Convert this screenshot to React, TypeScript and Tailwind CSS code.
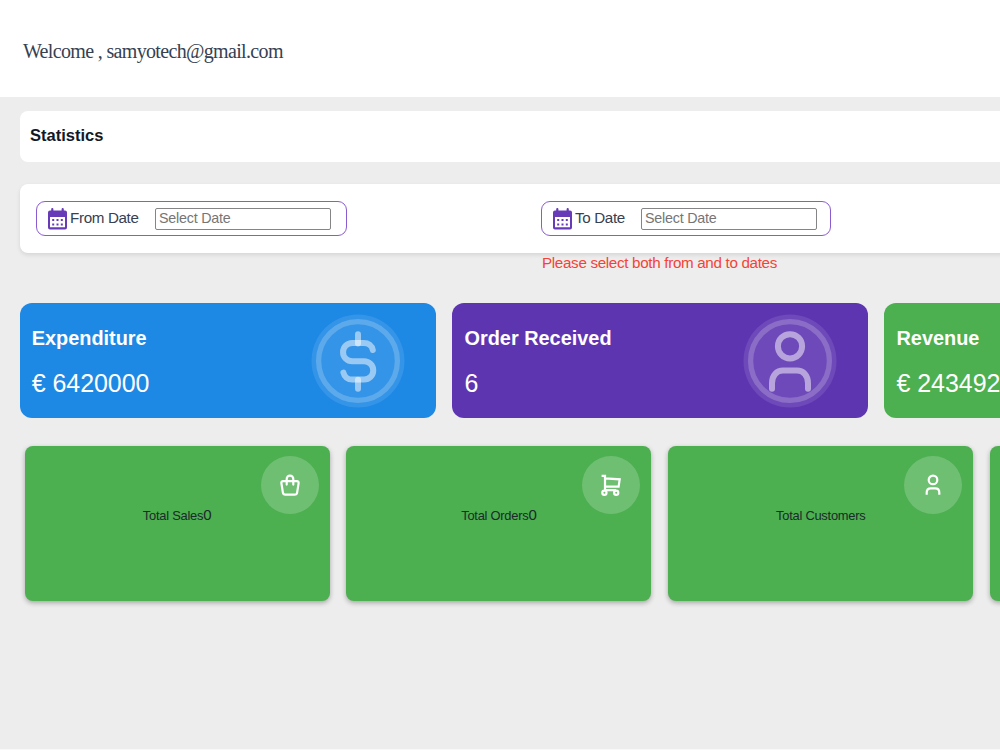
import type { ReactNode } from "react";

function CalendarIcon() {
  return (
    <svg className="ml-[11px] h-[22px] w-[19px] shrink-0" viewBox="0 0 19 22" fill="none">
      <path d="M4.3 1.2V4M14.7 1.2V4" stroke="#673ab7" strokeWidth="2.2" strokeLinecap="round" />
      <path
        fillRule="evenodd"
        fill="#673ab7"
        d="M2 2.4H17a2 2 0 0 1 2 2V19.5a2 2 0 0 1-2 2H2a2 2 0 0 1-2-2V4.4a2 2 0 0 1 2-2ZM2 8.9V19.3H17V8.9Z"
      />
      <path
        d="M4.2 11.1h2v2h-2zM8.5 11.1h2v2h-2zM12.8 11.1h2v2h-2zM4.2 15.4h2v2h-2zM8.5 15.4h2v2h-2zM12.8 15.4h2v2h-2z"
        fill="#673ab7"
      />
    </svg>
  );
}

function DateField({ label, className }: { label: string; className: string }) {
  return (
    <div className={`flex h-[35px] shrink-0 items-center rounded-[9px] border border-[#8a5cd0] ${className}`}>
      <CalendarIcon />
      <span className="-mt-0.5 ml-[3px] grow text-[15.2px] leading-5 tracking-[-0.35px] whitespace-nowrap text-[#364152]">{label}</span>
      <input
        className="h-[22px] w-[176px] rounded-[2px] border border-[#858585] bg-white px-[3px] pb-0.5 text-[14.3px] tracking-[-0.22px] placeholder:text-[#757575]"
        placeholder="Select Date"
      />
    </div>
  );
}

function Medallion({ children }: { children: ReactNode }) {
  return (
    <svg className="mt-[10.7px] size-[94px] shrink-0" viewBox="0 0 94 94" fill="none">
      <circle cx="47" cy="47" r="46.5" fill="#fff" fillOpacity="0.1" />
      <circle cx="47" cy="47" r="39.4" stroke="#fff" strokeOpacity="0.2" strokeWidth="5.3" />
      {children}
    </svg>
  );
}

const stroke = {
  stroke: "#fff",
  strokeOpacity: 0.5,
  strokeWidth: 6,
  strokeLinecap: "round" as const,
};

function SummaryCard({ title, value, className, children }: { title: string; value: string; className: string; children?: ReactNode }) {
  return (
    <div className={`flex h-[115px] w-[415.5px] shrink-0 justify-between rounded-xl pr-[31px] text-white ${className}`}>
      <div className="pt-[23px] whitespace-nowrap">
        <h3 className="text-[19.9px] leading-6 font-bold">{title}</h3>
        <p className="mt-[18px] text-[25px] leading-[30px] tracking-[-0.05px]">{value}</p>
      </div>
      {children && <Medallion>{children}</Medallion>}
    </div>
  );
}

function TotalCard({ label, value, children }: { label?: string; value?: string; children?: ReactNode }) {
  return (
    <div className="relative flex h-[155px] w-[305px] shrink-0 justify-center rounded-lg bg-[#4caf50] pt-[59px] text-[#1b2a2a] shadow-[0_2px_5px_rgba(0,0,0,0.3)]">
      {label && (
        <p className="text-[15px] leading-5 whitespace-nowrap">
          <span className="text-[12.9px] tracking-[-0.25px]">{label}</span>
          {value}
        </p>
      )}
      <div className="absolute top-[10.4px] right-[11px] flex size-[58px] items-center justify-center rounded-full bg-white/20">
        <svg className="-mt-px size-6" viewBox="0 0 24 24" fill="none" stroke="#fff" strokeWidth="2.2" strokeLinecap="round" strokeLinejoin="round">
          {children}
        </svg>
      </div>
    </div>
  );
}

export default function App() {
  return (
    <div className="h-[750px] w-[1000px] overflow-hidden border-b border-[#f8f8f8] bg-[#ededed] font-['Liberation_Sans',Arial,sans-serif]">
      <header className="h-[97px] bg-white pt-[39px] pl-[23px] font-['Liberation_Serif',serif] text-[20px] leading-6 tracking-[-0.66px] text-[#364152]">
        Welcome , samyotech@gmail.com
      </header>
      <main className="w-[1400px] pl-5">
        <section className="mt-3.5 h-[50.5px] rounded-lg bg-white pt-[12px] pl-[10px]">
          <h2 className="text-[16.5px] leading-6 font-bold text-[#121926]">Statistics</h2>
        </section>
        <section className="mt-[22.5px] flex h-[69px] rounded-lg bg-white pt-[17px] pl-4 shadow-[0_2px_4px_rgba(0,0,0,0.1)]">
          <DateField label="From Date" className="w-[311px] pr-[15px]" />
          <DateField label="To Date" className="ml-[194px] w-[290px] pr-[13px]" />
        </section>
        <p className="pl-[522px] text-[15.2px] leading-5 tracking-[-0.32px] text-[#f44336]">Please select both from and to dates</p>
        <section className="mt-[30px] flex gap-[16.5px]">
          <SummaryCard title="Expenditure" value="€ 6420000" className="bg-[#1e88e5] pl-[11.7px]">
            <path d="M61.8 36C61 31.5 57.5 29 52.8 29H41.2a9.15 9.15 0 0 0 0 18.3h11.9a9.15 9.15 0 0 1 0 18.3H41.2c-4.5 0-7.8-2.8-8.8-7" {...stroke} />
            <path d="M47 20.3V29.5" {...stroke} />
            <path d="M47 65.8V74.7" {...stroke} />
          </SummaryCard>
          <SummaryCard title="Order Received" value="6" className="bg-[#5e35b1] pl-[12.5px]">
            <circle cx="47" cy="32.3" r="12.1" {...stroke} />
            <path d="M29 74.7V69.3C29 61 34 56.6 40 56.6H54C60 56.6 65 61 65 69.3V74.7" {...stroke} />
          </SummaryCard>
          <SummaryCard title="Revenue" value="€ 243492" className="bg-[#4caf50] pl-[12.5px]" />
        </section>
        <section className="mt-[28px] flex gap-[16.8px] pl-[4.7px]">
          <TotalCard label="Total Sales" value="0">
            <path d="M5.2 8.2h13.6c1.5 0 2 .8 1.8 2.1l-1.5 9.3c-.2 1.4-1.1 2.1-2.5 2.1H7.4c-1.4 0-2.3-.7-2.5-2.1L3.4 10.300c-.2-1.300.3-2.100 1.800-2.100ZM8.7 11.600V5.900a3.300 3.300 0 0 1 6.600 0V11.600" />
          </TotalCard>
          <TotalCard label="Total Orders" value="0">
            <path d="M2.6 2.8H6V17.2M6 5.4L20.7 6.3L19.6 13.6H6M6 17.2H17" strokeLinecap="butt" strokeLinejoin="miter" />
            <circle cx="5.4" cy="19.7" r="2.1" />
            <circle cx="17.2" cy="19.7" r="2.1" />
          </TotalCard>
          <TotalCard label="Total Customers">
            <circle cx="12" cy="6.9" r="4.3" />
            <path d="M5.700 21.700V19.600C5.700 17 7.500 15.400 9.800 15.400H14.200C16.500 15.400 18.300 17 18.300 19.600V21.700" strokeLinecap="butt" />
          </TotalCard>
          <TotalCard />
        </section>
      </main>
    </div>
  );
}
